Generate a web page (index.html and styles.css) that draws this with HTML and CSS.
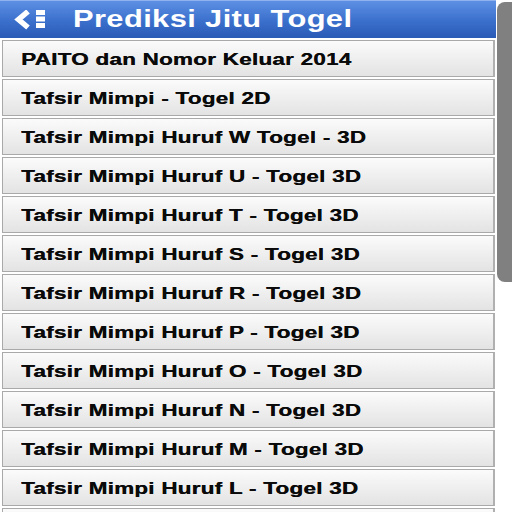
FILE: index.html
```html
<!DOCTYPE html>
<html>
<head>
<meta charset="utf-8">
<link rel="stylesheet" href="styles.css">
</head>
<body>
<div class="app">
  <header class="bar">
    <span class="back">
      <svg width="34" height="20" viewBox="0 0 34 20">
        <polyline points="14,1.5 4.5,9.5 14,17.5" fill="none" stroke="#fff" stroke-width="5.5" stroke-linejoin="miter"/>
        <rect x="22" y="0" width="9" height="5" fill="#fff"/>
        <rect x="22" y="6.5" width="9" height="5" fill="#fff"/>
        <rect x="22" y="13" width="9" height="5" fill="#fff"/>
      </svg>
    </span>
    <h1 class="title"><span class="wide">Prediksi Jitu Togel</span></h1>
  </header>
  <ul class="list">
    <li class="item"><span class="text">PAITO dan Nomor Keluar 2014</span></li>
    <li class="item"><span class="text">Tafsir Mimpi - Togel 2D</span></li>
    <li class="item"><span class="text">Tafsir Mimpi Huruf W Togel - 3D</span></li>
    <li class="item"><span class="text">Tafsir Mimpi Huruf U - Togel 3D</span></li>
    <li class="item"><span class="text">Tafsir Mimpi Huruf T - Togel 3D</span></li>
    <li class="item"><span class="text">Tafsir Mimpi Huruf S - Togel 3D</span></li>
    <li class="item"><span class="text">Tafsir Mimpi Huruf R - Togel 3D</span></li>
    <li class="item"><span class="text">Tafsir Mimpi Huruf P - Togel 3D</span></li>
    <li class="item"><span class="text">Tafsir Mimpi Huruf O - Togel 3D</span></li>
    <li class="item"><span class="text">Tafsir Mimpi Huruf N - Togel 3D</span></li>
    <li class="item"><span class="text">Tafsir Mimpi Huruf M - Togel 3D</span></li>
    <li class="item"><span class="text">Tafsir Mimpi Huruf L - Togel 3D</span></li>
    <li class="item"></li>
  </ul>
  <div class="scroll"></div>
</div>
</body>
</html>
```
FILE: styles.css
```css
html, body {
  margin: 0;
  padding: 0;
  background: #fff;
  overflow: hidden;
}
.app {
  position: relative;
  width: 512px;
  height: 512px;
  overflow: hidden;
  font-family: "Liberation Sans", Arial, sans-serif;
}
.bar {
  width: 496px;
  height: 38px;
  display: flex;
  align-items: center;
  box-sizing: border-box;
  border-top: 1px solid #8fb3ee;
  background: linear-gradient(#5d90e4, #3a6fcc 55%, #2a5bb5);
}
.back {
  display: flex;
  margin-left: 14px;
  width: 36px;
}
.title {
  margin: 0 0 0 23px;
  color: #fff;
  font-size: 23px;
  font-weight: bold;
  letter-spacing: 0.3px;
}
.wide {
  display: inline-block;
  transform: scaleX(1.34);
  transform-origin: left center;
}
.list {
  list-style: none;
  margin: 2px 0 0 2px;
  padding: 0;
  width: 493px;
  display: flex;
  flex-direction: column;
  gap: 2px;
}
.item {
  box-sizing: border-box;
  height: 37px;
  flex: none;
  display: flex;
  align-items: center;
  padding-left: 18px;
  padding-top: 2px;
  border: 1px solid #a9a9a9;
  border-right: 2px solid #b0b0b0;
  background: linear-gradient(#fbfbfb, #e3e3e3);
  color: #0a0a0a;
  font-size: 16px;
  font-weight: bold;
  letter-spacing: 0.2px;
}
.text {
  display: inline-block;
  transform: scaleX(1.4);
  transform-origin: left center;
  white-space: nowrap;
  text-shadow: 0.3px 0 0 #0a0a0a;
}
.scroll {
  position: absolute;
  left: 497px;
  top: 2px;
  width: 15px;
  height: 280px;
  border-radius: 8px 0 0 8px;
  background: #808080;
}
```
